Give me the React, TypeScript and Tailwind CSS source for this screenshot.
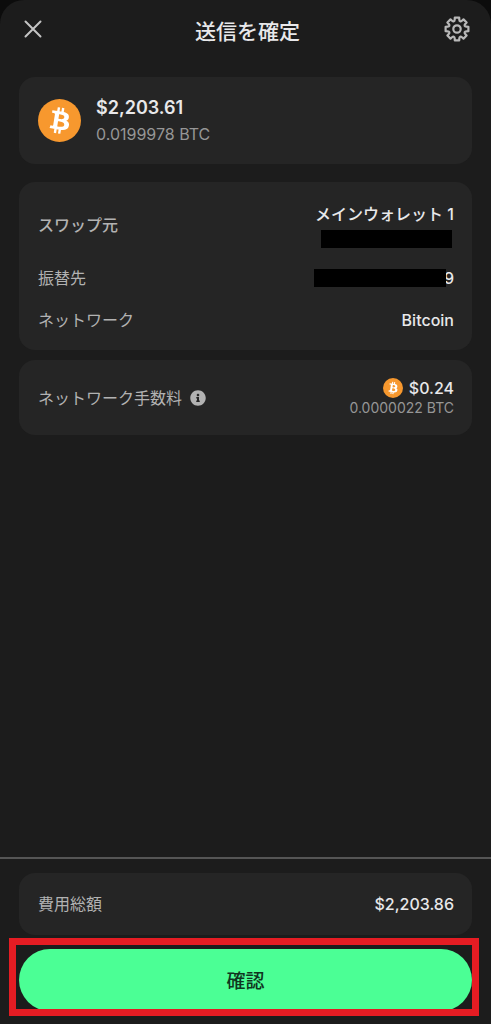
import React from 'react';
import { clsx } from 'clsx';
import { FaInfoCircle } from 'react-icons/fa';

const point = (radius: number, degrees: number) => {
  const rad = (degrees * Math.PI) / 180;
  return `${(14 + radius * Math.sin(rad)).toFixed(2)} ${(14 - radius * Math.cos(rad)).toFixed(2)}`;
};

// Eight teeth with a rounded valley between each pair
const gearPath =
  [0, 45, 90, 135, 180, 225, 270, 315]
    .map((a, i) => `${i === 0 ? 'M' : 'L'}${point(11.6, a - 11)} L${point(11.6, a + 11)} L${point(9.6, a + 14)} C${point(7.9, a + 18)} ${point(7.9, a + 27)} ${point(9.6, a + 31)}`)
    .join(' ') + ' Z';

const GearIcon = () => (
  <svg viewBox="0 0 28 28" className="size-7" fill="none" stroke="currentColor" strokeWidth="2.2" strokeLinejoin="round" aria-hidden="true">
    <path d={gearPath} />
    <circle cx="14" cy="14" r="3.7" />
  </svg>
);

const CloseIcon = () => (
  <svg viewBox="0 0 18 18" className="size-[18px]" fill="none" stroke="currentColor" strokeWidth="2" strokeLinecap="round" aria-hidden="true">
    <path d="M1.5 1.5l15 15M16.5 1.5l-15 15" />
  </svg>
);

const BitcoinBadge = ({ large }: { large?: boolean }) => (
  <svg viewBox="0 0 32 32" className={clsx('shrink-0', large ? 'size-[43px]' : 'size-5')} aria-hidden="true">
    <circle cx="16" cy="16" r="16" fill="#f7982e" />
    <path
      fill="#fff"
      fillRule="evenodd"
      transform="rotate(-5 16 16)"
      d="M23.189 14.02c.314-2.096-1.283-3.223-3.465-3.975l.708-2.84-1.728-.43-.69 2.765c-.454-.114-.92-.22-1.385-.326l.695-2.783L15.596 6l-.708 2.839c-.376-.086-.746-.17-1.104-.26l.002-.009-2.384-.595-.46 1.846s1.283.294 1.256.312c.7.175.826.638.805 1.006l-.806 3.235c.048.012.11.03.18.057l-.183-.045-1.13 4.532c-.086.212-.303.531-.793.41.018.025-1.256-.313-1.256-.313l-.858 1.978 2.25.561c.418.105.828.215 1.231.318l-.715 2.872 1.727.43.708-2.84c.472.127.93.245 1.378.357l-.706 2.828 1.728.43.715-2.866c2.948.558 5.164.333 6.097-2.333.752-2.146-.037-3.385-1.588-4.192 1.13-.26 1.98-1.003 2.207-2.538zm-3.95 5.538c-.533 2.147-4.148.986-5.32.695l.95-3.805c1.172.293 4.929.872 4.37 3.11zm.535-5.569c-.487 1.953-3.495.96-4.47.717l.86-3.45c.975.243 4.118.696 3.61 2.733z"
    />
  </svg>
);

const Card = ({ className, children }: { className?: string; children: React.ReactNode }) => (
  <section className={clsx('rounded-2xl bg-[#252525] pl-[19px] pr-[18px]', className)}>{children}</section>
);

const Label = ({ children, strong }: { children: React.ReactNode; strong?: boolean }) => (
  <dt className={clsx('text-base leading-6 text-[#b2b2b2]', strong && 'font-medium')}>{children}</dt>
);

export default function App() {
  return (
    <div className="min-h-screen bg-[#0c0c0c] font-['Inter','Noto_Sans_CJK_JP',sans-serif]">
      <main className="flex min-h-screen flex-col rounded-t-3xl bg-[#1c1c1c] text-[#e8e8ea]">
        <header className="flex items-center justify-between pt-[10px] pr-5 pl-6">
          <button type="button" aria-label="閉じる" className="flex size-7 items-center text-[#c4c4c4]">
            <CloseIcon />
          </button>
          <h1 className="pt-1.5 text-[21px] leading-8 font-medium">送信を確定</h1>
          <button type="button" aria-label="設定" className="text-[#b8b8b8]">
            <GearIcon />
          </button>
        </header>

        <div className="flex flex-1 flex-col px-[19px] pt-[29px] pb-6">
          <Card className="flex h-[87px] items-center gap-[15px]">
            <BitcoinBadge large />
            <div>
              <p className="text-[18px] leading-7 font-semibold">$2,203.61</p>
              <p className="pb-0.5 text-base leading-6 text-[#969696]">0.0199978 BTC</p>
            </div>
          </Card>

          <Card className="mt-[18px] pt-5 pb-[18px]">
            <dl className="flex flex-col gap-[18px]">
              <div className="flex items-center justify-between">
                <Label strong>スワップ元</Label>
                <dd className="flex flex-col items-end">
                  <span className="text-base leading-6 font-medium">メインウォレット 1</span>
                  <span className="mt-1 mr-0.5 h-[18px] w-[131px] bg-black" />
                </dd>
              </div>
              <div className="flex items-center justify-between">
                <Label>振替先</Label>
                <dd className="flex items-center text-base leading-6 font-medium">
                  <span className="z-10 -mr-0.5 h-[18px] w-[132px] bg-black" />9
                </dd>
              </div>
              <div className="flex items-center justify-between">
                <Label>ネットワーク</Label>
                <dd className="text-base leading-6 font-medium">Bitcoin</dd>
              </div>
            </dl>
          </Card>

          <Card className="mt-[10px] py-[18px]">
            <dl className="flex items-center justify-between">
              <Label>
                <span className="flex items-center gap-2">
                  ネットワーク手数料
                  <FaInfoCircle className="size-4" aria-hidden="true" />
                </span>
              </Label>
              <dd className="flex flex-col items-end">
                <span className="flex items-center gap-1.5 text-base leading-5 font-medium">
                  <BitcoinBadge />
                  $0.24
                </span>
                <span className="text-sm leading-[19px] text-[#969696]">0.0000022 BTC</span>
              </dd>
            </dl>
          </Card>
        </div>

        <footer className="border-t-2 border-[#555555] px-[19px] pt-[14px] pb-[13px]">
          <Card className="h-[62px]">
            <dl className="flex h-full items-center justify-between">
              <Label>費用総額</Label>
              <dd className="text-base leading-6 font-medium">$2,203.86</dd>
            </dl>
          </Card>
          <div className="relative mt-[14px]">
            <button type="button" className="h-[62px] w-full rounded-full bg-[#4bff95] pt-1 text-[19px] font-medium text-[#10361f]">
              確認
            </button>
            <span className="pointer-events-none absolute -top-[11px] -right-[7px] -bottom-[5px] -left-[10px] border-[7px] border-[#e51c23]" />
          </div>
        </footer>
      </main>
    </div>
  );
}
